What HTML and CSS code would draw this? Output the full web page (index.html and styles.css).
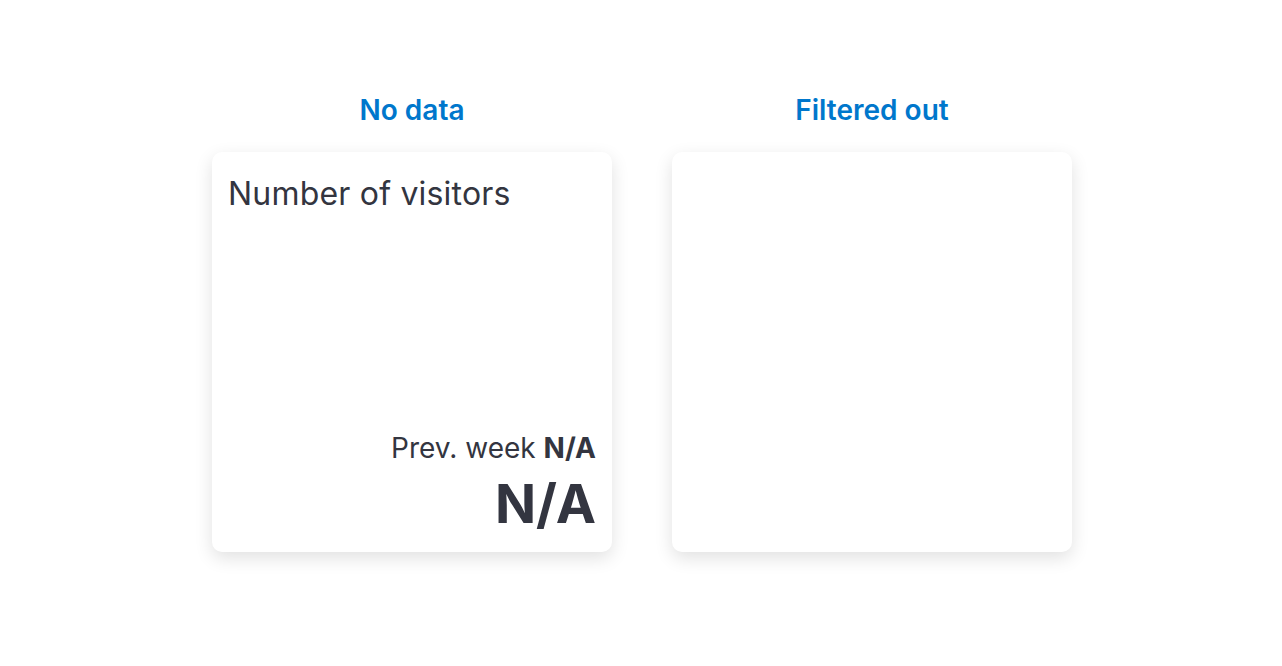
FILE: index.html
```html
<!DOCTYPE html>
<html lang="en">
<head>
  <meta charset="UTF-8" />
  <meta name="viewport" content="width=device-width, initial-scale=1" />
  <title>KPI states</title>
  <link rel="stylesheet" href="styles.css">
</head>
<body>
  <div class="states">
    <div class="state">
      <div class="state-title">No data</div>
      <div class="kpi-card">
        <div class="kpi-name">Number of visitors</div>
        <div class="kpi-bottom">
          <div class="kpi-prev">Prev. week <b>N/A</b></div>
          <div class="kpi-value">N/A</div>
        </div>
      </div>
    </div>

    <div class="state">
      <div class="state-title">Filtered out</div>
      <div class="kpi-card"></div>
    </div>
  </div>
</body>
</html>
```

FILE: styles.css
```css
* {
  box-sizing: border-box;
  margin: 0;
  padding: 0;
}

body {
  font-family: 'Inter', sans-serif;
  background: #ffffff;
  color: #333540;
  min-height: 100vh;
}

.states {
  display: flex;
  justify-content: center;
  gap: 60px;
  padding: 94px 0 0 2px;
}

.state {
  display: flex;
  flex-direction: column;
  align-items: center;
  gap: 26px;
}

.state-title {
  font-size: 28px;
  line-height: 32px;
  font-weight: 600;
  color: #0077cc;
}

.kpi-card {
  width: 400px;
  height: 400px;
  background: #ffffff;
  border-radius: 10px;
  box-shadow: 0 6px 18px rgba(0, 0, 0, 0.12);
  padding: 22px 16px 15px;
  display: flex;
  flex-direction: column;
  justify-content: space-between;
}

.kpi-name {
  font-size: 32px;
  line-height: 40px;
  letter-spacing: 0.2px;
}

.kpi-bottom {
  text-align: right;
}

.kpi-prev {
  font-size: 28px;
  line-height: 32px;
  margin-bottom: 7px;
}

.kpi-prev b {
  font-weight: 700;
}

.kpi-value {
  font-size: 54px;
  line-height: 66px;
  font-weight: 700;
}
```
